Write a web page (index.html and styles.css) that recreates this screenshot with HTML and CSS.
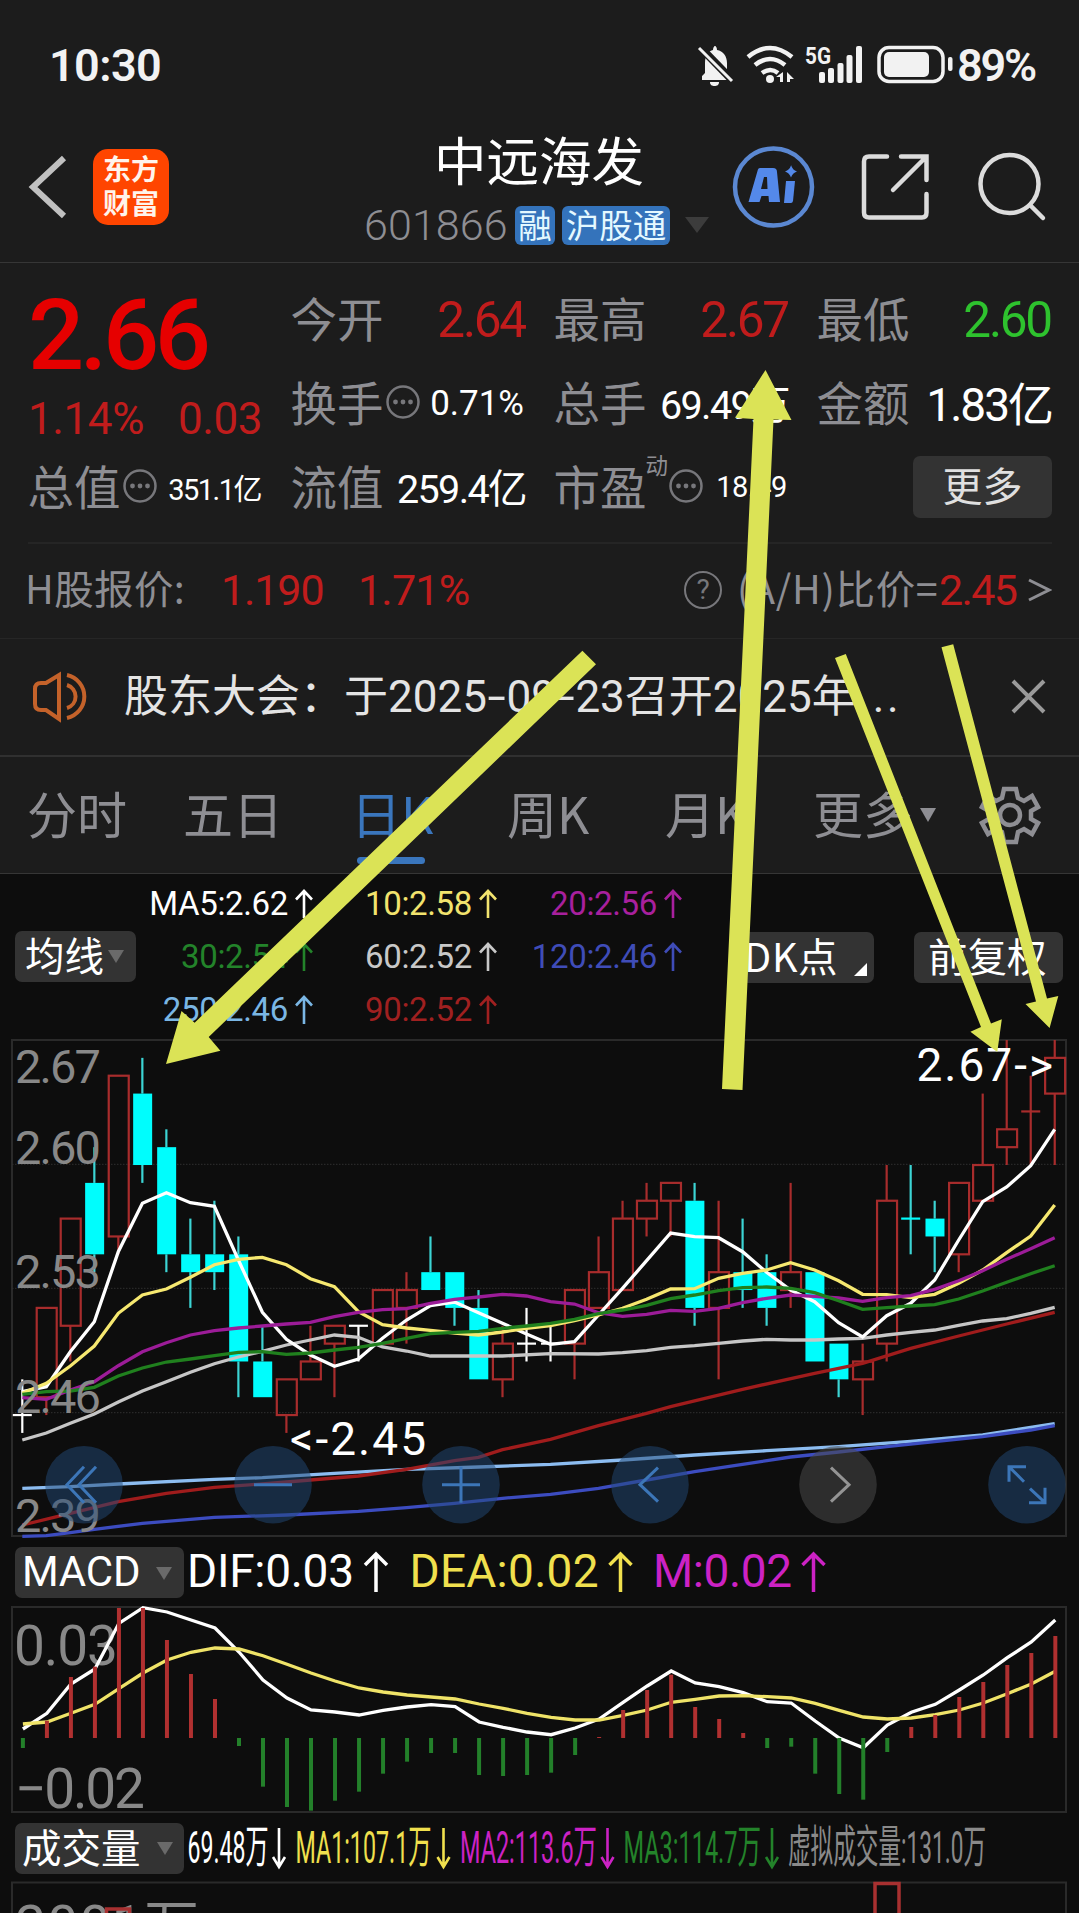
FILE: index.html
```html
<!DOCTYPE html>
<html lang="zh-CN">
<head>
<meta charset="utf-8">
<title>中远海发 601866</title>
<link rel="stylesheet" href="styles.css">
</head>
<body>
<div class="screen">
  <div class="status">
    <span class="clock">10:30</span>
    <svg class="status-icons" width="270" height="44" viewBox="692 44 270 44" fill="#f2f2f2">
      <path d="M702 80v-4l3-3V63c0-8 4-12 8-13 0-2 1-4 2-4s2 2 2 4c6 1 10 6 10 13v11l5 5v1z"/>
      <path d="M710 82h9c0 3-2 4-4.500 4s-4.500-1-4.500-4z"/>
      <path d="M699 46l35 36" stroke="#1c1c1c" stroke-width="8"/>
      <path d="M699 48l33 33" stroke="#f2f2f2" stroke-width="3"/>
      <g fill="none" stroke="#f2f2f2" stroke-width="4.500">
        <path d="M748 57q22-18 44 0"/><path d="M755 65q15-12 30 0"/><path d="M762 73q8.500-6 16 0"/>
      </g>
      <circle cx="770" cy="79" r="4"/>
      <path d="M783 72v10h-3v-5h-4zM787 72l7 7h-4v3h-3z"/>
      <text x="805" y="63.500" class="net" textLength="26" lengthAdjust="spacingAndGlyphs">5G</text>
      <rect x="819" y="72" width="6" height="11" rx="2"/><rect x="828" y="68" width="6" height="15" rx="2"/><rect x="837.500" y="63" width="6" height="20" rx="2"/><rect x="846.500" y="55" width="6" height="28" rx="2"/><rect x="856" y="46" width="6" height="37" rx="2"/>
      <rect x="879" y="47.500" width="64" height="34" rx="10" fill="none" stroke="#f2f2f2" stroke-width="3.500"/>
      <rect x="884" y="52" width="45" height="25" rx="5"/>
      <rect x="948" y="57" width="4.500" height="14" rx="2"/>
    </svg>
    <span class="battery">89%</span>
  </div>

  <header class="header">
    <svg class="back" width="40" height="70" viewBox="0 0 40 70" fill="none" stroke="#c0c0c0" stroke-width="6"><path d="M37 6 6 35l31 29"/></svg>
    <div class="logo">东方<br>财富</div>
    <div class="title">
      <h1>中远海发</h1>
      <div class="sub"><span class="code">601866</span><span class="badge b1">融</span><span class="badge b2">沪股通</span><i class="tri"></i></div>
    </div>
    <svg class="actions" width="320" height="84" viewBox="733 145 320 84" fill="none" stroke="#dcdcdc" stroke-width="4.500">
      <circle cx="774.500" cy="187" r="38.500" stroke="#5b88d2"/>
      <g stroke="none" fill="#5489ea">
        <path fill-rule="evenodd" d="M760 168h14q4 0 4 4l3 30h-11l-.5-6h-7l-2 6h-11l9-31q.5-3 2.500-3zm5 9-3 12h6.500l-.5-12z"/>
        <path d="M787 181h9l-2 20q-.5 2-2 2h-7z"/>
        <path d="M792 165q1.500 5 6 6.500-4.500 1.500-6 6-1.500-4.500-6-6 4.500-1.500 6-6z"/>
      </g>
      <path d="M888 156.500h-18q-5 0-5 5v51q0 5 5 5h53q4.500 0 4.500-5V194M902 156.500h25.500V180M926 158l-32 32" stroke-linecap="round"/>
      <circle cx="1010.500" cy="184" r="29"/><path d="m1031 205 13 13" stroke-linecap="round"/>
    </svg>
  </header>

  <section class="quote">
    <div class="grid">
      <div class="price"><b>2.66</b><p><span>1.14%</span><span>0.03</span></p></div>
      <div class="cell"><em>今开</em><span class="v50 red">2.64</span></div>
      <div class="cell"><em>最高</em><span class="v50 red">2.67</span></div>
      <div class="cell"><em>最低</em><span class="v50 green">2.60</span></div>
      <div class="cell"><em>换手</em><svg class="dots" width="36" height="36"><use href="#dots"/></svg><span class="v35">0.71%</span></div>
      <div class="cell"><em>总手</em><span class="v39">69.49万</span></div>
      <div class="cell"><em>金额</em><span class="v46">1.83亿</span></div>
      <div class="cell"><em>总值</em><svg class="dots" width="36" height="36"><use href="#dots"/></svg><span class="v29">351.1亿</span></div>
      <div class="cell"><em>流值</em><span class="v39">259.4亿</span></div>
      <div class="cell"><em>市盈</em><sup>动</sup><svg class="dots pe" width="36" height="36"><g id="dots"><circle cx="18" cy="18" r="15.500" fill="none" stroke="#77777b" stroke-width="2.500"/><g fill="#77777b"><circle cx="10.500" cy="18" r="2.400"/><circle cx="18" cy="18" r="2.400"/><circle cx="25.500" cy="18" r="2.400"/></g></g></svg><span class="v29 pe-v">18.49</span></div>
      <div class="cell end"><span class="more">更多</span></div>
    </div>
    <div class="hshare">
      <span class="lab">H股报价:</span><span class="h1v">1.190</span><span class="h2v">1.71%</span>
      <span class="help">?</span><span class="lab ratio">(A/H)比价=</span><span class="h3v">2.45</span><svg width="24" height="26" viewBox="0 0 24 26" fill="none" stroke="#8e8e93" stroke-width="3"><path d="m1 3 20 10L1 23"/></svg>
    </div>
  </section>

  <section class="notice">
    <svg width="60" height="54" viewBox="0 0 60 54" fill="none" stroke="#c4622a" stroke-width="4"><path d="M3 19q0-6 6-6h5L27 5v44L14 40H9q-6 0-6-6zM35 15a12 12 0 0 1 0 23M35 5a22 22 0 0 1 0 43"/></svg>
    <p>股东大会：于2025<i>-</i>09<i>-</i>23召开2025年<b>...</b></p>
    <svg class="close" width="36" height="36" viewBox="0 0 36 36" stroke="#9a9a9a" stroke-width="4"><path d="m2 2 31 31M33 2 2 33"/></svg>
  </section>

  <nav class="tabs">
    <span class="t1">分时</span><span class="t2">五日</span><span class="t3 on">日K</span><span class="t4">周K</span><span class="t5">月K</span><span class="t6">更多<i></i></span>
    <svg width="62" height="62" viewBox="-31 -31 62 62" fill="none" stroke="#8e8e93" stroke-width="4.500"><path d="M-6-26H6L8-17 14-14 22-19 28-8 21-4V4L28 8 22 19 14 14 8 17 6 27H-6L-8 17-14 14-22 19-28 8-21 4V-4L-28-8-22-19-14-14-8-17z"/><circle r="10"/></svg>
  </nav>

  <section class="legend">
    <div class="btn ma">均线<i class="tri"></i></div>
    <div class="mas">
      <span style="color:#fff">MA5:2.62<svg><use href="#up"/></svg></span><span style="color:#f2e36e">10:2.58<svg><use href="#up"/></svg></span><span style="color:#a8209e">20:2.56<svg><use href="#up"/></svg></span>
      <span style="color:#23832a">30:2.54<svg><use href="#up"/></svg></span><span style="color:#c8c8c8">60:2.52<svg><use href="#up"/></svg></span><span style="color:#3f4cb8">120:2.46<svg><use href="#up"/></svg></span>
      <span style="color:#7ab6e4">250:2.46<svg><use href="#up"/></svg></span><span style="color:#a02020">90:2.52<svg><g id="up"><path d="M9 29V2M1 10.500 9 2l8 8.500" fill="none" stroke="currentColor" stroke-width="2.600"/></g></svg></span>
    </div>
    <div class="btn dk">DK点<i></i></div>
    <div class="btn fq">前复权</div>
  </section>

  <svg class="kline" id="kline" width="1079" height="507" viewBox="0 1033 1079 507"></svg>

  <div class="macd-head">
    <div class="btn ind latin">MACD<i class="tri"></i></div>
    <svg class="vals" width="895" height="56" viewBox="184 1544 895 56">
      <g class="n46"><text x="187" y="1587" textLength="167" fill="#fff">DIF:0.03</text><text x="409.500" y="1587" textLength="189" fill="#f0e04e">DEA:0.02</text><text x="653" y="1587" textLength="139" fill="#cc22c4">M:0.02</text></g>
      <g fill="none" stroke-width="3.500"><path stroke="#fff" d="M376 1592v-37m-11 10 11-11 11 11"/><path stroke="#f0e04e" d="M620.500 1592v-37m-11 10 11-11 11 11"/><path stroke="#cc22c4" d="M813.500 1592v-37m-11 10 11-11 11 11"/></g>
    </svg>
  </div>

  <svg class="macd" id="macd" width="1079" height="212" viewBox="0 1604 1079 212"></svg>

  <div class="vol-head">
    <div class="btn ind">成交量<i class="tri"></i></div>
    <svg class="vals" width="895" height="60" viewBox="184 1818 895 60">
      <g class="n45"><text x="187.500" y="1862.500" textLength="81" lengthAdjust="spacingAndGlyphs" fill="#fff">69.48万</text><text x="295.500" y="1862.500" textLength="136" lengthAdjust="spacingAndGlyphs" fill="#f0e04e">MA1:107.1万</text><text x="460" y="1862.500" textLength="137" lengthAdjust="spacingAndGlyphs" fill="#cc22c4">MA2:113.6万</text><text x="623.500" y="1862.500" textLength="137.500" lengthAdjust="spacingAndGlyphs" fill="#23832a">MA3:114.7万</text><text x="788" y="1862.500" textLength="198" lengthAdjust="spacingAndGlyphs" fill="#8a8a8a">虚拟成交量:131.0万</text></g>
      <g fill="none" stroke-width="2.600"><path stroke="#fff" d="M279 1828v39m-6-10 6 10 6-10"/><path stroke="#f0e04e" d="M443.500 1828v39m-6-10 6 10 6-10"/><path stroke="#cc22c4" d="M607.500 1828v39m-6-10 6 10 6-10"/><path stroke="#23832a" d="M772 1828v39m-6-10 6 10 6-10"/></g>
    </svg>
  </div>

  <svg class="vol" width="1079" height="34" viewBox="0 1879 1079 34">
    <path d="M12 1920V1882.500H1066V1920" fill="none" stroke="#2a2a2a" stroke-width="2"/>
    <text x="15" y="1945" class="axis big" textLength="184">2001万</text>
    <path d="M106.500 1920v-11h23v11M875 1920v-36.500h24V1920" fill="none" stroke="#a83030" stroke-width="3.500"/>
  </svg>

  <svg class="arrows" width="1079" height="1913" fill="#dbe356">
    <path d="M582.400 650.700 596 664.300 208.700 1037l11.700 13.700L166 1064l15.500-53 13.100 11.700z"/>
    <path d="m765.500 370 26 50-18-.5L742.500 1090l-20.500-1L753.500 419l-18.500-1.300z"/>
    <path d="m835 658 10.800-4L991 1023.500l10.800-4.200-4.500 32.700-26.900-20.300 10.600-4.700z"/>
    <path d="m941.500 647.300 11.700-3L1047 998.500l11.300-2.500-8.700 32-24.100-24 10.500-2.500z"/>
  </svg>
</div>
<script src="charts.js"></script>
</body>
</html>
```
FILE: charts.js
```js
// Horizontal centre of the n-th trading day
const X = i => 22.3 + 24.01 * i;
// Price to vertical position; 2.67 sits on the top frame line
const Y = p => 1040 + (2.67 - p) * 1786;
const RED = '#a82c2c', CYAN = '#00fdfd', WHITE = '#fff';

// colour, body top, body bottom, high, low
const days = [
  ['w',2.46,2.46,2.48,2.45],['r',2.52,2.47,2.52,2.46],['r',2.57,2.51,2.57,2.49],['c',2.59,2.55,2.61,2.54],
  ['r',2.65,2.56,2.65,2.55],['c',2.64,2.60,2.66,2.59],['c',2.61,2.55,2.62,2.54],['c',2.55,2.54,2.57,2.52],
  ['c',2.55,2.54,2.58,2.53],['c',2.55,2.49,2.56,2.47],['c',2.49,2.47,2.51,2.47],['r',2.48,2.46,2.48,2.45],
  ['r',2.49,2.48,2.51,2.48],['r',2.51,2.50,2.51,2.47],['w',2.51,2.51,2.51,2.49],['r',2.53,2.50,2.53,2.50],
  ['r',2.53,2.52,2.54,2.50],['c',2.54,2.53,2.56,2.53],['c',2.54,2.52,2.54,2.51],['c',2.52,2.48,2.53,2.48],
  ['r',2.50,2.48,2.51,2.47],['w',2.50,2.50,2.52,2.49],['w',2.50,2.50,2.51,2.49],['r',2.53,2.50,2.53,2.48],
  ['r',2.54,2.52,2.56,2.52],['r',2.57,2.53,2.58,2.53],['r',2.58,2.57,2.59,2.56],['r',2.59,2.58,2.59,2.56],
  ['c',2.58,2.52,2.59,2.51],['r',2.54,2.52,2.58,2.48],['c',2.54,2.53,2.57,2.52],['c',2.54,2.52,2.55,2.51],
  ['r',2.54,2.53,2.59,2.52],['c',2.54,2.49,2.54,2.49],['c',2.50,2.48,2.50,2.47],['r',2.49,2.48,2.50,2.46],
  ['r',2.58,2.50,2.60,2.49],['c',2.57,2.57,2.60,2.55],['c',2.57,2.56,2.58,2.54],['r',2.59,2.55,2.59,2.54],
  ['r',2.60,2.58,2.64,2.58],['r',2.62,2.61,2.67,2.60],['r',2.63,2.63,2.65,2.60],['r',2.66,2.64,2.67,2.60]
];

// Plot heights in thirds of a pixel below the panel origin; [day, height] pairs where sparse
const all = a => a.map((y, i) => [i, y]);
const averages = [
  ['#8cbcf0', [[0,1375],[2,1370],[4,1362],[8,1348],[10,1343],[13,1330],[16,1318],[19,1311],[22,1303],[25,1290],[28,1275],[31,1262],[34,1250],[37,1234],[40,1215],[43,1181]]],
  ['#3c4cc0', [[0,1519],[1,1517],[2,1508],[3,1498],[5,1480],[8,1462],[11,1455],[14,1444],[16,1433],[18,1420],[20,1405],[22,1393],[24,1375],[26,1350],[28,1325],[30,1303],[32,1281],[34,1266],[36,1250],[38,1235],[40,1220],[42,1200],[43,1187]]],
  ['#a01c1c', [[0,1485],[2,1450],[4,1415],[6,1390],[8,1372],[10,1362],[12,1350],[14,1338],[16,1318],[18,1292],[19,1282],[20,1259],[22,1228],[24,1187],[26,1150],[27,1130],[30,1078],[33,1030],[35,1000],[37,955],[39,918],[41,882],[43,847]]],
  ['#c6c6c6', [[0,1230],[1,1209],[2,1180],[3,1152],[4,1116],[5,1083],[6,1055],[7,1027],[8,1001],[9,981],[10,964],[11,945],[12,930],[13,915],[14,922],[15,951],[16,963],[17,978],[18,978],[20,978],[22,971],[24,972],[25,968],[26,962],[27,952],[28,947],[29,940],[30,933],[31,928],[32,930],[33,930],[34,927],[35,925],[36,915],[37,907],[38,900],[39,886],[40,873],[41,866],[42,850],[43,832]]],
  ['#fff', all([1085,1070,965,875,665,520,488,518,529,690,847,928,975,1009,987,925,870,827,816,848,880,912,943,935,855,775,692,609,620,623,665,727,780,815,878,921,857,820,750,630,515,471,407,298])],
  ['#f6e870', all([1090,1060,1008,948,850,795,777,742,704,688,682,704,746,770,845,884,894,901,909,915,906,895,887,872,855,835,808,777,776,745,730,720,698,720,752,793,794,803,793,760,720,668,618,525])],
  ['#9c1c98', all([1103,1108,1080,1055,1007,965,938,915,902,894,888,882,877,860,847,839,836,820,808,801,793,798,815,822,848,859,853,841,844,835,818,805,795,799,804,814,803,797,778,752,722,688,656,623])],
  ['#20801e', all([1093,1085,1083,1072,1038,1014,996,987,977,967,965,973,969,960,952,940,925,911,907,904,895,888,880,868,851,840,826,806,795,782,773,771,775,788,812,838,833,828,824,807,783,757,731,707])]
];

const line = (pts, origin, dx, color) =>
  `<polyline fill="none" stroke="${color}" stroke-width="3.300" points="${pts.map(([i, y]) => (X(i) + dx).toFixed(1) + ',' + (origin + y / 3).toFixed(1)).join(' ')}"/>`;

let k = '<rect x="12" y="1040" width="1054" height="496" fill="none" stroke="#2a2a2a" stroke-width="2"/>';
for (const y of [1164.3, 1288.3, 1412.7]) k += `<path d="M12 ${y}H1066" stroke="#303030" stroke-dasharray="1.500 1.500"/>`;

days.forEach(([c, top, bottom, high, low], i) => {
  const x = X(i), a = Y(top), b = Y(bottom), color = c === 'r' ? RED : c === 'c' ? CYAN : WHITE;
  const wick = (y1, y2) => y2 > y1 ? `<path d="M${x} ${y1}V${y2}" stroke="${c === 'c' ? '#3cd4d4' : color}" stroke-width="2.200"/>` : '';
  k += wick(Y(high), a) + wick(b, Y(low));
  if (top === bottom) k += `<path d="M${x - 9.5} ${a}h19" stroke="${color}" stroke-width="2.200"/>`;
  else if (c === 'c') k += `<rect x="${x - 9.2}" y="${a}" width="19" height="${b - a}" fill="${color}"/>`;
  else k += `<rect x="${x - 9.6}" y="${a}" width="20" height="${b - a}" fill="none" stroke="${color}" stroke-width="2.200"/>`;
});
averages.forEach(([color, pts]) => { k += line(pts, 1030, 0, color); });

[['2.67',1082.5],['2.60',1164],['2.53',1287.5],['2.46',1412.5],['2.39',1532]]
  .forEach(([t, y]) => { k += `<text class="axis" x="15" y="${y}" textLength="86">${t}</text>`; });
k += '<text class="mark" x="290" y="1455" textLength="136">&lt;-2.45</text><text class="mark" x="916.500" y="1081" textLength="136.500">2.67-&gt;</text>';

const icons = [
  [84, 'M0-18-17 0 0 18M12-18-5 0 12 18'], [273, 'M-19 0H19'], [461, 'M-19 0H19M0-18V18'],
  [650, 'M8-17-10 0 8 17'], [838, 'M-7-17 11 0-7 17'], [1027, 'M-18-3V-18H-1M-18-18-3-3M18 3V18H2M18 18 3 4']
];
icons.forEach(([x, d]) => {
  const grey = x === 838;
  k += `<g transform="translate(${x} 1484.700)"><circle r="38.800" fill="${grey ? 'rgba(72,72,72,.55)' : 'rgba(34,74,120,.5)'}"/><path d="${d}" fill="none" stroke="${grey ? '#949494' : '#3c76b8'}" stroke-width="3"/></g>`;
});
document.getElementById('kline').innerHTML = k;

// MACD panel: bar ends, then the two signal lines
const bars = [654,572,441,410,234,234,330,432,507,648,770,831,842,812,785,731,695,669,669,735,738,735,728,675,621,540,480,434,531,567,609,654,650,731,792,809,666,591,555,501,456,405,369,318];
const dif = [597,550,462,417,280,233,246,270,294,366,450,504,540,546,555,541,531,524,530,576,592,606,614,594,567,517,468,423,459,470,488,515,519,573,624,653,585,547,523,480,435,383,336,270];
const dea = [582,576,550,523,476,429,390,367,354,357,377,403,429,453,474,486,495,501,507,522,535,550,562,570,570,556,540,517,508,498,497,500,504,520,541,561,567,564,554,540,519,491,462,424];
let m = '<rect x="12" y="1607" width="1054" height="205" fill="none" stroke="#2a2a2a" stroke-width="2"/><text class="axis big" x="14" y="1665" textLength="104">0.03</text><text class="axis big" x="15" y="1807.500" textLength="130">−0.02</text>';
m += line(all(dif), 1530, 0.6, '#fff');
m += line(all(dea), 1530, 0.6, '#efe368');
bars.forEach((y, i) => {
  m += `<path d="M${X(i) + 0.6} 1738V${1530 + y / 3}" stroke="${y < 624 ? '#b03030' : '#23802a'}" stroke-width="4"/>`;
});
document.getElementById('macd').innerHTML = m;
```
FILE: styles.css
```css
* { box-sizing: border-box; margin: 0; padding: 0; }
body { background: #0d0d0d; }
.screen { position: relative; width: 1079px; height: 1913px; overflow: hidden; background: #0d0d0d; font-family: Roboto, "Noto Sans CJK SC", sans-serif; color: #fff; white-space: nowrap; }
svg { display: block; flex: none; }
em, i { font-style: normal; }
sup { line-height: 1; }

.status { height: 107px; background: #1c1c1c; display: flex; align-items: flex-start; padding: 36px 0 0 49px; color: #f2f2f2; }
.clock { width: 643px; font-size: 45px; font-weight: 600; line-height: 60px; letter-spacing: -.6px; }
.status-icons { margin-top: 8px; overflow: visible; }
.net { font: 700 24px Roboto, sans-serif; }
.battery { font-size: 45px; font-weight: 600; line-height: 60px; margin-left: -5px; letter-spacing: -2.2px; }

.header { height: 156px; background: #1c1c1c; border-bottom: 1px solid #363636; display: flex; align-items: flex-start; padding-left: 27px; }
.back { margin-top: 45px; }
.logo { width: 76px; height: 76px; margin: 42px 0 0 26px; border-radius: 15px; background: #ff4500; font: 700 28px/34px "Noto Sans CJK SC", sans-serif; text-align: center; padding-top: 2px; color: #fff4ec; }
.title { width: 350px; margin-left: 195px; padding-top: 18px; }
.title h1 { font: 400 52.5px/66px "Noto Sans CJK SC", sans-serif; padding-left: 70px; }
.sub { display: flex; align-items: center; height: 40px; margin-top: 14px; }
.code { width: 151px; font-size: 43px; font-weight: 350; color: #8e8e93; letter-spacing: .1px; }
.badge { height: 39px; border-radius: 6px; background: #3473bb; color: #e4f8ff; font: 400 33.500px/35px "Noto Sans CJK SC", sans-serif; text-align: center; }
.b1 { width: 40px; }
.b2 { width: 108px; margin-left: 7px; }
.tri { width: 0; height: 0; border: 12px solid transparent; border-top: 16px solid #3c3c3c; border-bottom: 0; margin-left: 15px; }
.actions { margin: 38px 0 0 18px; }

.quote { height: 375px; background: #1c1c1c; padding: 14px 27px 0 28px; }
.grid { display: grid; grid-template-columns: repeat(4, 233px); grid-template-rows: repeat(3, 84px); column-gap: 30px; height: 267px; border-bottom: 2px solid #252525; align-content: start; }
.price { grid-row: span 2; color: #e60000; }
.price b { display: block; font-size: 99px; font-weight: 500; line-height: 112px; letter-spacing: -4.400px; padding-top: 2px; }
.price p { display: flex; gap: 34px; font-size: 44px; line-height: 56px; letter-spacing: -.4px; color: #c01c1c; }
.cell { display: flex; align-items: center; }
.cell em { font: 400 46.500px/84px "Noto Sans CJK SC", sans-serif; color: #8e8e93; margin: -5px 0 0 -.5px; }
.cell > span { margin-left: auto; }
.dots { margin: -3px 0 0 1px; }
.cell > .v50 { font-size: 49.500px; letter-spacing: -2.200px; padding-top: 2px; margin-right: -1px; }
.cell > .v46 { font-size: 46px; letter-spacing: -2px; padding-bottom: 4px; margin-right: -2px; }
.cell > .v39 { font-size: 39.500px; letter-spacing: -1.600px; padding-bottom: 3px; margin-right: -2px; }
.v35 { font-size: 35px; }
.v29 { font-size: 29px; letter-spacing: -1.500px; }
.pe { margin-left: 0; }
.cell > .pe-v { letter-spacing: -.4px; }
.red { color: #c01c1c; }
.green { color: #2ec22e; }
.cell sup { font: 400 22.500px/30px "Noto Sans CJK SC", sans-serif; color: #8e8e93; align-self: flex-start; margin: 4px 0 0 -1px; }
.cell > .more { width: 139px; height: 62px; border-radius: 7px; background: #333; color: #e0e0e0; font: 400 40px/56px "Noto Sans CJK SC", sans-serif; text-align: center; margin-right: -2px; }
.hshare { display: flex; align-items: center; height: 80px; margin-top: 6px; font-size: 43px; color: #c01c1c; }
.lab { font: 400 39.500px/60px "Noto Sans CJK SC", sans-serif; color: #8e8e93; width: 196px; margin: -6px 0 0 -3px; letter-spacing: .4px; }
.h1v { width: 137px; letter-spacing: -1.1px; }
.h2v { width: 326px; letter-spacing: -.8px; }
.help { width: 38px; height: 38px; border: 2.500px solid #77777b; border-radius: 50%; color: #77777b; font-size: 28px; line-height: 33px; text-align: center; }
.ratio { width: 202px; margin-left: 15px; letter-spacing: .7px; }
.h3v { width: 89px; letter-spacing: -1.600px; }

.notice { height: 119px; background: #1c1c1c; border-top: 1px solid #262626; border-bottom: 2px solid #303030; display: flex; align-items: center; padding-left: 32px; }
.notice p { width: 887px; margin: -1px 0 0 32px; font: 400 44px/60px Roboto, "Noto Sans CJK SC", sans-serif; color: #e4e4e4; }
.notice i { display: inline-block; width: 19.500px; text-align: center; transform: scaleX(1.500); }
.notice b { font-weight: 400; letter-spacing: 2.500px; margin-left: 3px; }

.tabs { height: 117px; background: #1c1c1c; border-bottom: 1px solid #363636; display: flex; align-items: center; padding-left: 27px; font: 400 50px/100px "Noto Sans CJK SC", sans-serif; color: #8e8e93; }
.tabs span { position: relative; height: 117px; line-height: 110px; }
.t1 { width: 156px; } .t2 { width: 168px; } .t3 { width: 156px; } .t4 { width: 158px; } .t5 { width: 148px; } .t6 { width: 166px; }
.tabs .on { color: #3a76bd; }
.on::after { content: ""; position: absolute; left: 6px; top: 100px; width: 68px; height: 7px; border-radius: 4px; background: #3a76bd; }
.t6 i { display: inline-block; border: 8px solid transparent; border-top: 14px solid #8e8e93; border-bottom: 0; margin-left: 7px; vertical-align: 12px; }

.legend { height: 160px; display: flex; align-items: flex-start; padding-left: 15px; }
.btn { background: #333; border-radius: 7px; font: 400 39.500px/44px "Noto Sans CJK SC", sans-serif; display: flex; align-items: center; color: #fff; height: 51px; flex: none; padding-bottom: 6px; }
.btn .tri { border-width: 13px 8px 0; border-top-color: #6a6a6a; margin: 5px 0 0 4px; }
.ma { width: 121px; margin-top: 57px; padding-left: 10px; }
.mas { display: grid; grid-template-columns: 177px 184px 185px; grid-auto-rows: 53px; width: 546px; padding-top: 3px; font-size: 33px; line-height: 53px; letter-spacing: -.35px; }
.mas span { display: flex; justify-content: flex-end; align-items: center; }
.mas svg { width: 18px; height: 30px; margin-left: 7px; }
.dk { width: 135px; margin: 58px 0 0 57px; padding-left: 5px; position: relative; letter-spacing: .7px; }
.dk i { position: absolute; right: 7px; bottom: 7px; border-left: 13px solid transparent; border-bottom: 13px solid #fff; }
.fq { width: 149px; margin: 58px 0 0 40px; padding-left: 14px; }

.axis { font: 400 47px Roboto, sans-serif; fill: #888; }
.axis.big { font: 400 55px Roboto, "Noto Sans CJK SC", sans-serif; }
.mark { font: 400 46px Roboto, sans-serif; fill: #fff; }
.kline { margin-top: -1px; }

.macd-head { height: 64px; display: flex; padding: 7px 0 0 15px; }
.ind { width: 169px; padding-left: 7px; }
.ind .tri { margin-left: 16px; }
.latin { font: 400 42px/51px Roboto, sans-serif; padding-bottom: 3px; letter-spacing: -.2px; }
.macd-head .vals { margin-top: -3px; }
.vol-head { height: 63px; display: flex; padding: 7px 0 0 15px; }
.vol-head .vals { margin-top: -5px; }
.n46 { font: 400 46px Roboto, sans-serif; }
.n45 { font: 400 45px Roboto, "Noto Sans CJK SC", sans-serif; }

/* hand-drawn pointers laid over the whole screen */
.arrows { position: absolute; left: 0; top: 0; pointer-events: none; }
```
